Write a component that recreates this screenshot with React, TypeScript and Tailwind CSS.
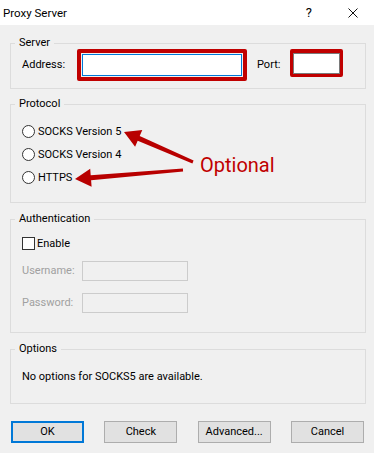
import React from "react";

function Group({
  label,
  className,
  children,
}: {
  label: string;
  className: string;
  children: React.ReactNode;
}) {
  return (
    <fieldset className={"ml-[10px] mr-[8px] border border-[#dcdcdc] " + className}>
      <legend className="ml-[4px] px-[4px] text-[11px] leading-[14px]">{label}</legend>
      {children}
    </fieldset>
  );
}

function Radio({ label }: { label: string }) {
  return (
    <div className="flex h-[23px] items-center">
      <span className="h-[13px] w-[13px] rounded-full border border-[#333333] bg-white" />
      <span className="ml-[3px]">{label}</span>
    </div>
  );
}

export default function App() {
  return (
    <div className="relative h-[453px] w-[374px] overflow-hidden bg-[#f0f0f0] font-[Roboto,sans-serif] text-[11px] leading-[14px] text-black">
      {/* Title bar */}
      <div className="flex h-[25px] items-center bg-white pl-[3px] pr-[16px]">
        <span className="flex-1 text-[11.5px]">Proxy Server</span>
        <span className="mr-[36px] text-[13px]">?</span>
        <svg width="10" height="10" viewBox="0 0 10 10" className="block">
          <path d="M0.5 0.5 L9.5 9.5 M9.5 0.5 L0.5 9.5" stroke="#111" strokeWidth="1" fill="none" />
        </svg>
      </div>

      {/* Server */}
      <Group label="Server" className="mt-[11px] pb-[7px]">
        <div className="-mt-px flex items-center pl-[11px]">
          <span className="w-[55px]">Address:</span>
          <div className="rounded-[2px] border-4 border-[#c00000] p-px">
            <input
              readOnly
              className="block h-[22px] w-[160px] border border-[#0078d7] bg-white outline-none"
            />
          </div>
          <span className="ml-[10px] w-[33px]">Port:</span>
          <div className="self-start rounded-[2px] border-[3px] border-t-4 border-[#c00000]">
            <input
              readOnly
              className="block h-[21px] w-[47px] border border-[#7a7a7a] bg-white outline-none"
            />
          </div>
        </div>
      </Group>

      {/* Protocol */}
      <Group label="Protocol" className="mt-[8px] pb-[13px]">
        <div className="pl-[11px] pt-[9px]">
          <Radio label="SOCKS Version 5" />
          <Radio label="SOCKS Version 4" />
          <Radio label="HTTPS" />
        </div>
      </Group>

      {/* Authentication */}
      <Group label="Authentication" className="mt-[9px] pb-[19px]">
        <div className="pl-[11px] pt-[9px]">
          <div className="flex h-[17px] items-center">
            <span className="h-[13px] w-[13px] border border-[#333333] bg-white" />
            <span className="ml-[2px]">Enable</span>
          </div>
          <div className="mt-[9px] flex h-[20px] items-center">
            <span className="w-[60px] text-[#a0a0a0]">Username:</span>
            <div className="h-[20px] w-[106px] border border-[#cccccc] bg-[#f0f0f0]" />
          </div>
          <div className="mt-[12px] flex h-[20px] items-center">
            <span className="w-[60px] text-[#a0a0a0]">Password:</span>
            <div className="h-[20px] w-[106px] border border-[#cccccc] bg-[#f0f0f0]" />
          </div>
        </div>
      </Group>

      {/* Options */}
      <Group label="Options" className="mt-[9px] pb-[19px]">
        <div className="pl-[11px] pt-[14px]">No options for SOCKS5 are available.</div>
      </Group>

      {/* Buttons */}
      <div className="mt-[17px] flex justify-between pl-[11px] pr-[10px]">
        <button className="h-[22px] w-[73px] border-2 border-[#0078d7] bg-[#e1e1e1]">OK</button>
        <button className="h-[22px] w-[73px] border border-[#adadad] bg-[#e1e1e1]">Check</button>
        <button className="h-[22px] w-[73px] border border-[#adadad] bg-[#e1e1e1]">Advanced...</button>
        <button className="h-[22px] w-[73px] border border-[#adadad] bg-[#e1e1e1]">Cancel</button>
      </div>

      {/* Annotation overlay */}
      <svg
        className="pointer-events-none absolute left-0 top-0"
        width="374"
        height="453"
        viewBox="0 0 374 453"
      >
        <polygon
          points="124,132 142.3,130.1 139.7,136.1 193.6,160.6 192.4,163.4 137.7,140.7 135.1,146.7"
          fill="#b80000"
        />
        <polygon
          points="75,179 90.2,168.7 90.7,175.2 182.9,168.5 183.1,171.5 91.1,180.2 91.6,186.7"
          fill="#b80000"
        />
      </svg>
      <span className="pointer-events-none absolute left-[200px] top-[155px] text-[20px] leading-[20px] text-[#c00000]">
        Optional
      </span>
    </div>
  );
}
